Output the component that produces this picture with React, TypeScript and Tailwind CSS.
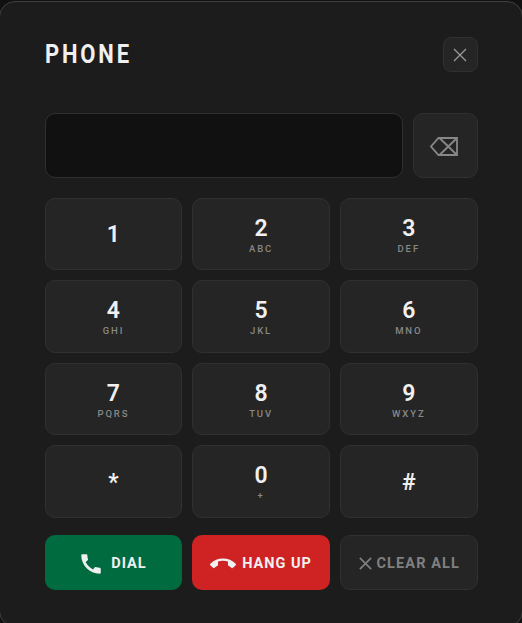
import { MdCall, MdCallEnd } from "react-icons/md";

const KEYS = [
  { digit: "1", letters: "" },
  { digit: "2", letters: "ABC" },
  { digit: "3", letters: "DEF" },
  { digit: "4", letters: "GHI" },
  { digit: "5", letters: "JKL" },
  { digit: "6", letters: "MNO" },
  { digit: "7", letters: "PQRS" },
  { digit: "8", letters: "TUV" },
  { digit: "9", letters: "WXYZ" },
  { digit: "*", letters: "" },
  { digit: "0", letters: "+" },
  { digit: "#", letters: "" },
];

function CrossIcon({ className, width = "1.3" }: { className: string; width?: string }) {
  return (
    <svg viewBox="0 0 16 16" fill="none" stroke="currentColor" strokeWidth={width} className={className}>
      <path d="M2 2 L14 14 M14 2 L2 14" />
    </svg>
  );
}

function BackspaceIcon() {
  return (
    <svg viewBox="0 0 28 19" fill="none" stroke="currentColor" strokeWidth="1.8" className="w-[28px] h-[19px]">
      <path d="M8.5 1 H27 V18 H8.5 L1 9.5 Z" />
      <path d="M10 1.5 L26.5 17.5 M26.5 1.5 L10 17.5" />
    </svg>
  );
}

export default function App() {
  return (
    <div className="w-[522px] h-[623px] overflow-hidden bg-[#111111] font-['Roboto',sans-serif]">
      {/* the panel is a bit bigger than the window, only its top edge and corners show */}
      <div className="w-[524px] h-[626px] -ml-[1px] mt-[1px] rounded-[16px] border border-[#404040] bg-[#1c1c1c] pt-[35px] pl-[44.6px] pr-[44.4px]">
        <div className="flex items-center justify-between h-[35px]">
          <h1 className="origin-left scale-x-[0.88] text-[25px] font-bold tracking-[3.2px] text-[#f0f0f0]">PHONE</h1>
          <button className="flex items-center justify-center w-[35px] h-[35px] rounded-[8px] border border-[#303030] bg-[#252525] text-[#999999]">
            <CrossIcon className="w-[16px] h-[16px]" />
          </button>
        </div>

        <div className="flex gap-[10px] mt-[41px] h-[65px]">
          <div className="flex-1 rounded-[10px] border border-[#303030] bg-[#111111]" />
          <button className="flex items-center justify-center w-[65px] pt-[2px] pr-[3px] rounded-[10px] border border-[#303030] bg-[#252525] text-[#888888]">
            <BackspaceIcon />
          </button>
        </div>

        <div className="grid grid-cols-3 gap-[10px] mt-[19.75px]">
          {KEYS.map((k) => (
            <button
              key={k.digit}
              className="flex flex-col items-center justify-center h-[72.5px] pt-[2px] rounded-[10px] border border-[#303030] bg-[#252525]"
            >
              <span className="text-[23px] leading-[26px] font-semibold text-[#f0f0f0]">{k.digit}</span>
              {k.letters && (
                <span className="text-[9.5px] leading-[12px] mt-[1px] font-medium tracking-[1.9px] text-[#888888]">
                  {k.letters}
                </span>
              )}
            </button>
          ))}
        </div>

        <div className="grid grid-cols-3 gap-[10px] mt-[17.25px] h-[55px]">
          <button className="flex items-center justify-center gap-[7px] pt-[2px] pr-[2px] rounded-[10px] bg-[#016b40] text-[14.5px] font-bold tracking-[1px] text-[#f0f0f0]">
            <MdCall className="w-[26px] h-[26px]" />
            DIAL
          </button>
          <button className="flex items-center justify-center gap-[6px] pt-[2px] rounded-[10px] bg-[#cf2222] text-[14.5px] font-bold tracking-[1px] text-[#f0f0f0]">
            <MdCallEnd className="w-[26px] h-[26px]" />
            HANG UP
          </button>
          <button className="flex items-center justify-center gap-[4px] pt-[2px] rounded-[10px] border border-[#303030] bg-[#252525] text-[14.5px] font-bold tracking-[1.1px] text-[#808080]">
            <CrossIcon className="w-[15px] h-[15px]" width="1.7" />
            CLEAR ALL
          </button>
        </div>
      </div>
    </div>
  );
}
